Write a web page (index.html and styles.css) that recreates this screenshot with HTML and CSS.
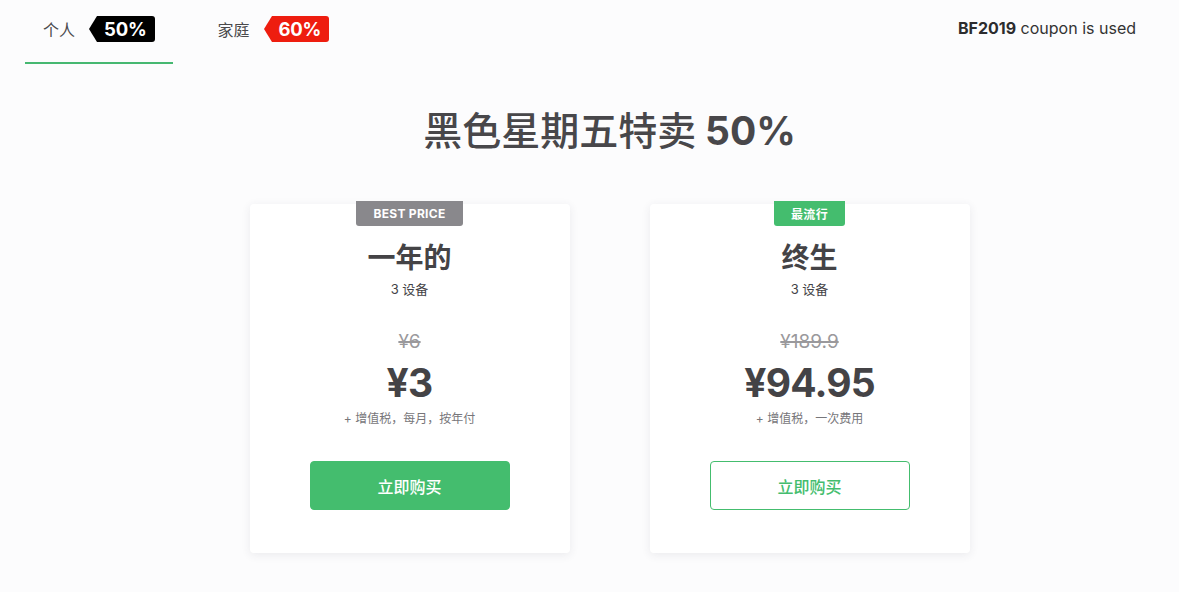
FILE: index.html
```html
<!DOCTYPE html>
<html lang="zh">
<head>
<meta charset="utf-8">
<link rel="stylesheet" href="styles.css">
</head>
<body>
<header class="topbar">
  <nav class="tabs">
    <div class="tab active">
      <span class="tab-label">个人</span>
      <span class="tag tag-black">50%</span>
    </div>
    <div class="tab">
      <span class="tab-label">家庭</span>
      <span class="tag tag-red">60%</span>
    </div>
  </nav>
  <div class="coupon"><b>BF2019</b> coupon is used</div>
</header>

<main class="main">
  <h1 class="headline">黑色星期五特卖 <b>50%</b></h1>
  <div class="cards">
    <section class="card">
      <div class="ribbon ribbon-gray">BEST PRICE</div>
      <h2 class="plan">一年的</h2>
      <div class="devices">3 设备</div>
      <div class="old-price">¥6</div>
      <div class="price">¥3</div>
      <div class="note">+ 增值税，每月，按年付</div>
      <button class="btn btn-solid">立即购买</button>
    </section>
    <section class="card">
      <div class="ribbon ribbon-green">最流行</div>
      <h2 class="plan">终生</h2>
      <div class="devices">3 设备</div>
      <div class="old-price">¥189.9</div>
      <div class="price">¥94.95</div>
      <div class="note">+ 增值税，一次费用</div>
      <button class="btn btn-outline">立即购买</button>
    </section>
  </div>
</main>
</body>
</html>
```

FILE: styles.css
```css
* { box-sizing: border-box; }
html, body { margin: 0; padding: 0; }
body {
  width: 1179px;
  height: 592px;
  overflow: hidden;
  background: #fcfcfd;
  font-family: Inter, "Noto Sans CJK SC", sans-serif;
  color: #444346;
}

.topbar {
  display: flex;
  justify-content: space-between;
  align-items: flex-start;
  padding: 0 43px 0 25px;
}

.tabs {
  display: flex;
  gap: 27px;
}

.tab {
  display: flex;
  align-items: center;
  gap: 14px;
  height: 64px;
  padding: 0 18px 4px 18px;
  border-bottom: 2px solid transparent;
}
.tab.active { border-bottom-color: #46b871; }

.tab-label {
  font-family: "Noto Sans CJK SC", sans-serif;
  font-size: 16px;
  color: #4a4a4c;
}

.tag {
  position: relative;
  display: inline-block;
  height: 26px;
  line-height: 26px;
  padding: 0 8px 0 7px;
  margin-left: 8px;
  font-size: 18.5px;
  font-weight: 700;
  color: #fff;
  border-radius: 0 3px 3px 0;
  letter-spacing: -0.2px;
}
.tag::before {
  content: "";
  position: absolute;
  left: -8px;
  top: 0;
  border-top: 13px solid transparent;
  border-bottom: 13px solid transparent;
  border-right: 8px solid;
}
.tag-black { background: #000; }
.tag-black::before { border-right-color: #000; }
.tag-red { background: #ee1d0f; }
.tag-red::before { border-right-color: #ee1d0f; }

.coupon {
  margin-top: 18px;
  font-size: 16px;
  color: #333;
}
.coupon b { font-weight: 700; color: #2c2c2e; }

.main {
  display: flex;
  flex-direction: column;
  align-items: center;
  padding-left: 40px;
}

.headline {
  margin: 39px 0 0;
  font-size: 39px;
  font-weight: 500;
  line-height: 50px;
  color: #48474a;
  font-family: "Noto Sans CJK SC", sans-serif;
}
.headline b { font-family: Inter, sans-serif; font-weight: 700; }

.cards {
  display: flex;
  gap: 80px;
  margin-top: 48px;
}

.card {
  width: 320px;
  height: 349px;
  background: #fff;
  border-radius: 4px;
  box-shadow: 0 2px 10px rgba(60, 50, 80, 0.09);
  display: flex;
  flex-direction: column;
  align-items: center;
}

.ribbon {
  margin-top: -3px;
  height: 25px;
  line-height: 25px;
  padding: 0 17px;
  border-radius: 0 0 3px 3px;
  color: #fff;
  font-size: 12px;
  font-weight: 700;
  letter-spacing: 0.3px;
}
.ribbon-gray { background: #89888c; }
.ribbon-green { background: #44bd6e; font-family: "Noto Sans CJK SC", sans-serif; }

.plan {
  margin: 12px 0 0;
  font-size: 28px;
  line-height: 36px;
  font-weight: 700;
  font-family: "Noto Sans CJK SC", sans-serif;
  color: #444346;
}

.devices {
  font-size: 13px;
  line-height: 20px;
  margin-top: 5px;
  color: #444346;
  font-family: Inter, "Noto Sans CJK SC", sans-serif;
}

.old-price {
  margin-top: 31px;
  font-size: 19px;
  line-height: 24px;
  color: #9a999c;
  text-decoration: line-through;
  text-decoration-thickness: 2px;
}

.price {
  margin-top: 5px;
  font-size: 39px;
  line-height: 48px;
  font-weight: 700;
  color: #444346;
  letter-spacing: -0.8px;
}

.note {
  margin-top: 3px;
  font-size: 12px;
  line-height: 18px;
  color: #77767a;
}

.btn {
  margin-top: 33px;
  width: 200px;
  height: 49px;
  border-radius: 4px;
  font-family: "Noto Sans CJK SC", sans-serif;
  font-size: 16px;
  font-weight: 500;
  cursor: pointer;
}
.btn-solid {
  background: #44bd6e;
  border: 1px solid #44bd6e;
  color: #fff;
}
.btn-outline {
  background: #fff;
  border: 1px solid #44bd6e;
  color: #44bd6e;
}
```
